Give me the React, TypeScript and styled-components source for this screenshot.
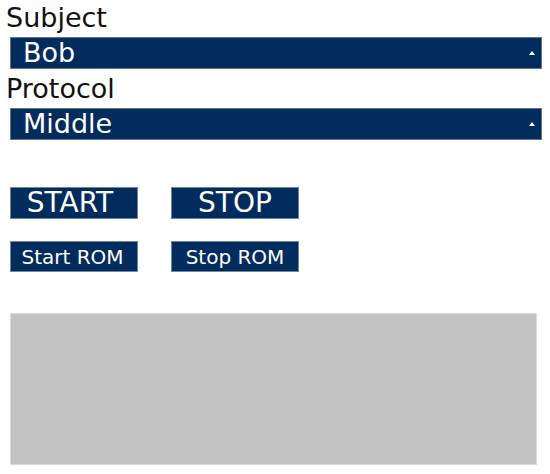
import React from 'react';
import styled, { createGlobalStyle } from 'styled-components';

const GlobalStyle = createGlobalStyle`
    body {
        margin: 0;
        background: #ffffff;
        font-family: "DejaVu Sans", Verdana, sans-serif;
    }
`;

const Page = styled.div`
    width: 550px;
    height: 474px;
    padding-top: 2px;
    box-sizing: border-box;
    display: flex;
    flex-direction: column;
`;

const Label = styled.div<{ gap?: number }>`
    margin-top: ${props => props.gap || 0}px;
    padding-left: 6px;
    height: 31px;
    line-height: 31px;
    font-size: 27px;
    color: #111;
`;

const SelectBar = styled.div`
    margin: 4px 0 0 10px;
    width: 532px;
    height: 32px;
    box-sizing: border-box;
    border: 1px solid #5f7590;
    background-color: #012c5d;
    color: #fff;
    display: flex;
    align-items: center;
    padding: 0 6px 0 12px;
    font-size: 27px;
    line-height: 30px;
    .value {
        flex: 1;
    }
`;

const ButtonGrid = styled.div`
    margin: 47px 0 0 10px;
    display: grid;
    grid-template-columns: 128px 128px;
    column-gap: 33px;
    row-gap: 22px;
`;

const Button = styled.button<{ big?: boolean; shift?: number }>`
    height: ${props => props.big ? 32 : 31}px;
    padding: 0 ${props => props.shift || 0}px 0 0;
    margin: 0;
    border: 1px solid #6f86a3;
    background-color: #012c5d;
    color: #fff;
    font-family: "DejaVu Sans", Verdana, sans-serif;
    font-size: ${props => props.big ? 28 : 20}px;
    white-space: pre;
    line-height: 1;
    cursor: pointer;
`;

const Canvas = styled.div`
    margin: 41px 0 0 10px;
    width: 527px;
    height: 152px;
    box-sizing: border-box;
    background-color: #c2c2c2;
    border: 1px solid #dcdcdc;
`;

const Arrow = () => (
    <svg width="6" height="4" viewBox="0 0 6 4">
        <polygon points="3,0 6,4 0,4" fill="#fff" />
    </svg>
);

const Select: React.FC<{ value: string }> = ({ value }) => (
    <SelectBar role="combobox">
        <span className="value">{value}</span>
        <Arrow />
    </SelectBar>
);

export default function App() {
    return (
        <>
            <GlobalStyle />
            <Page>
                <Label>Subject</Label>
                <Select value="Bob" />
                <Label gap={4}>Protocol</Label>
                <Select value="Middle" />
                <ButtonGrid>
                    <Button big shift={8}>START</Button>
                    <Button big>STOP</Button>
                    <Button shift={3}>Start ROM</Button>
                    <Button>Stop ROM</Button>
                </ButtonGrid>
                <Canvas />
            </Page>
        </>
    );
}
